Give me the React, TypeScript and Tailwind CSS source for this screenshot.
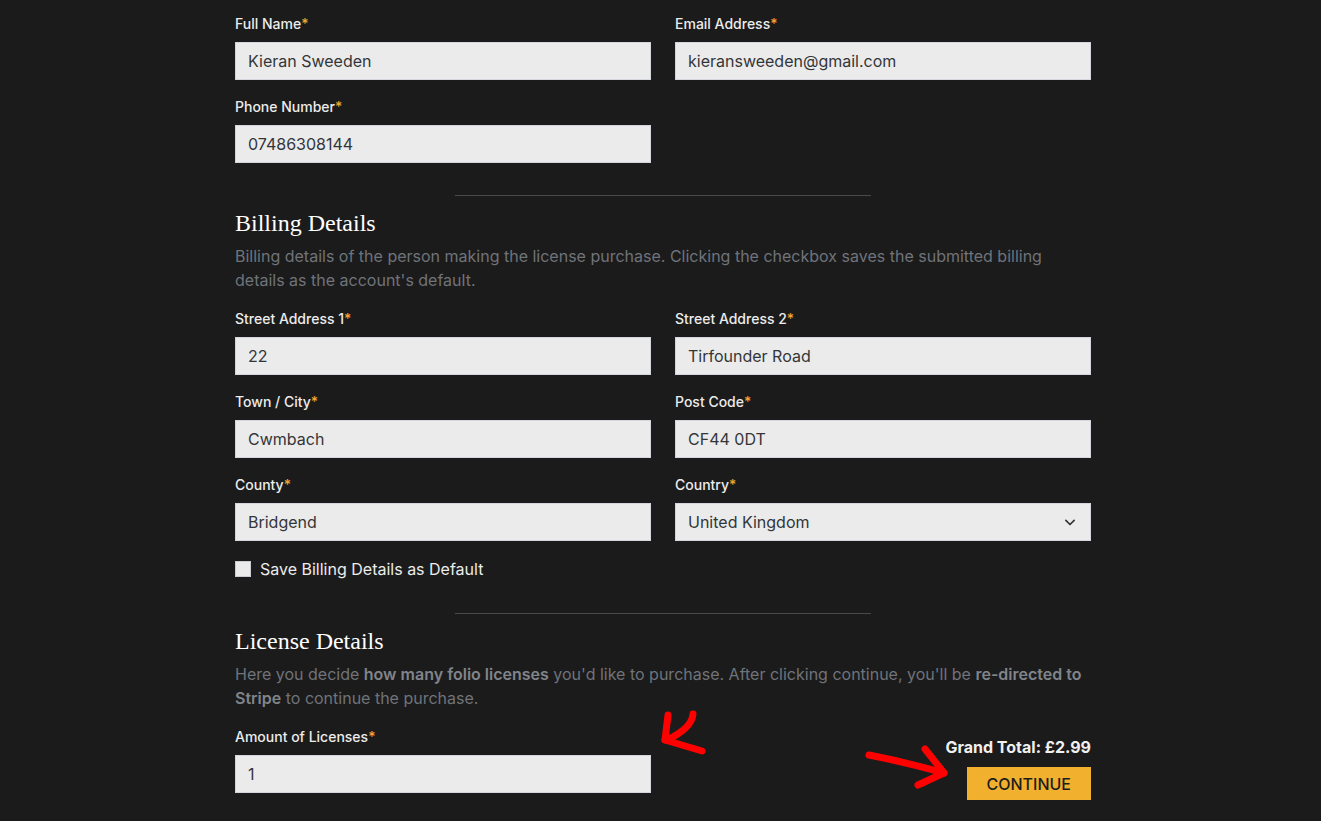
import React from "react";

const Label = ({ children }: { children: React.ReactNode }) => (
  <label className="block text-sm leading-5 font-medium text-[#ececec] mb-2">
    {children}
    <span className="text-[#f2a531]">*</span>
  </label>
);

const Field = ({ label, value }: { label: string; value: string }) => (
  <div>
    <Label>{label}</Label>
    <div className="h-[38px] bg-[#ebebeb] border border-[#d3d7dd] px-[12px] flex items-center text-base text-[#333639]">
      {value}
    </div>
  </div>
);

const SelectField = ({ label, value }: { label: string; value: string }) => (
  <div>
    <Label>{label}</Label>
    <div className="h-[38px] bg-[#ebebeb] border border-[#d3d7dd] pl-[12px] pr-[10px] flex items-center justify-between text-base text-[#333639]">
      <span>{value}</span>
      <svg width="20" height="20" viewBox="0 0 24 24" fill="none" stroke="#333639" strokeWidth="2" strokeLinecap="round" strokeLinejoin="round">
        <path d="M7 10l5 5 5-5" />
      </svg>
    </div>
  </div>
);

const Divider = () => <div className="w-[416px] h-px bg-[#4a4a4a] mx-auto" />;

const Heading = ({ children }: { children: React.ReactNode }) => (
  <h2
    className="text-[24px] leading-8 text-white"
    style={{ fontFamily: '"Liberation Serif", "DejaVu Serif", serif' }}
  >
    {children}
  </h2>
);

export default function App() {
  return (
    <div
      className="relative min-h-[821px] bg-[#1b1b1b] overflow-hidden"
      style={{ fontFamily: 'Inter, "Noto Sans", sans-serif' }}
    >
      <div className="ml-[235px] w-[856px] pt-[14px]">
        <div className="grid grid-cols-2 gap-x-6 gap-y-[17px]">
          <Field label="Full Name" value="Kieran Sweeden" />
          <Field label="Email Address" value="kieransweeden@gmail.com" />
          <Field label="Phone Number" value="07486308144" />
        </div>

        <div className="mt-8">
          <Divider />
        </div>

        <div className="mt-[11px]">
          <Heading>Billing Details</Heading>
          <p className="mt-[5px] text-base leading-6 text-[#6f737a]">
            Billing details of the person making the license purchase. Clicking the checkbox saves the submitted billing details as the account's default.
          </p>
        </div>

        <div className="mt-[17px] grid grid-cols-2 gap-x-6 gap-y-[17px]">
          <Field label="Street Address 1" value="22" />
          <Field label="Street Address 2" value="Tirfounder Road" />
          <Field label="Town / City" value="Cwmbach" />
          <Field label="Post Code" value="CF44 0DT" />
          <Field label="County" value="Bridgend" />
          <SelectField label="Country" value="United Kingdom" />
        </div>

        <div className="mt-4 flex items-center gap-[9px] h-6">
          <div className="w-4 h-4 bg-[#ebebeb] border border-[#c9cdd3]" />
          <span className="text-base text-[#ececec]">Save Billing Details as Default</span>
        </div>

        <div className="mt-8">
          <Divider />
        </div>

        <div className="mt-[11px]">
          <Heading>License Details</Heading>
          <p className="mt-[5px] text-base leading-6 text-[#6f737a]">
            Here you decide <b className="font-semibold text-[#80848b]">how many folio licenses</b> you'd like to purchase. After clicking continue, you'll be <b className="font-semibold text-[#80848b]">re-directed to Stripe</b> to continue the purchase.
          </p>
        </div>

        <div className="mt-[17px] flex justify-between items-start">
          <div className="w-[416px]">
            <Field label="Amount of Licenses" value="1" />
          </div>
          <div className="pt-2 flex flex-col items-end">
            <div className="text-base leading-6 font-bold text-[#f0f0f0]">Grand Total: £2.99</div>
            <button className="mt-2 h-[33px] px-5 bg-[#f1b02d] text-base font-medium text-[#1d1d1d]">
              CONTINUE
            </button>
          </div>
        </div>
      </div>

      <svg className="absolute inset-0 pointer-events-none" width="1321" height="821" viewBox="0 0 1321 821">
        <g fill="none" stroke="#ff0000" strokeWidth="7" strokeLinecap="round" strokeLinejoin="round">
          <path d="M668 715 L665 740" />
          <path d="M693 714 Q692 728 667 740" />
          <path d="M665 740 L702 751" />
          <path d="M869 755 Q905 762 944 773" />
          <path d="M925 749 L944 773 L918 785" />
        </g>
      </svg>
    </div>
  );
}
